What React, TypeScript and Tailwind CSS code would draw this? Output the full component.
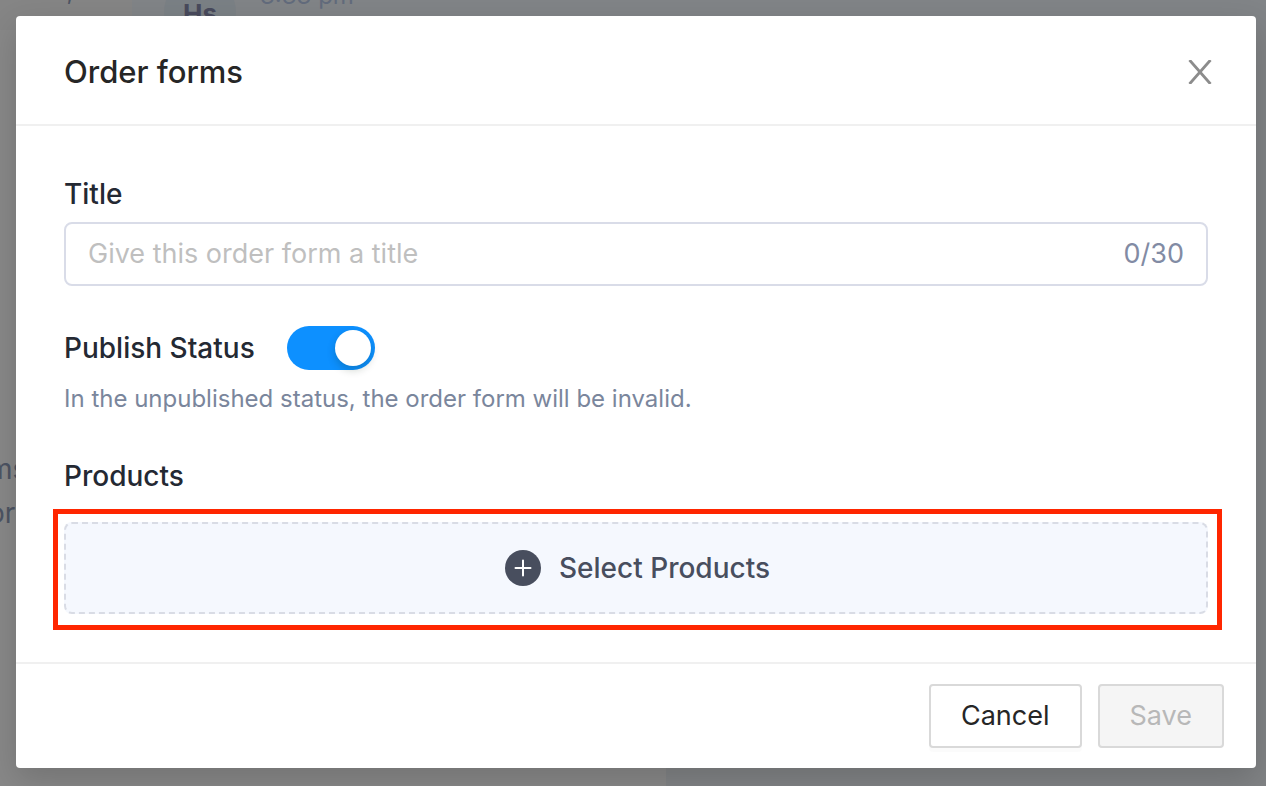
import { useState } from "react";

const MAX_TITLE = 30;

function Backdrop() {
  return (
    <div aria-hidden className="absolute inset-0 flex overflow-hidden bg-[#818385] text-[#4d5463]">
      <div className="flex w-[666px] shrink-0 flex-col bg-[#888888]">
        <div className="flex h-[30px] shrink-0">
          <div className="flex w-[132px] shrink-0 items-start justify-center bg-[#858585] pl-2">
            <span className="-mt-5 text-2xl leading-none">,</span>
          </div>
          <div className="-mr-[600px] flex grow items-start bg-[#818487] pl-8">
            <span className="-mt-6 grid h-[72px] w-[72px] shrink-0 place-items-center rounded-full bg-[#7a8085] pt-1 text-[26px] font-bold leading-8 text-[#484a5c]">
              Hs
            </span>
            <span className="ml-6 -mt-5 text-2xl leading-8 text-[#626b7c]">3:33 pm</span>
          </div>
        </div>
        <div className="mt-[417px] -ml-3 text-[28px] leading-[44px]">
          <p>ms</p>
          <p>or</p>
        </div>
      </div>
    </div>
  );
}

function CloseIcon() {
  return (
    <svg aria-hidden viewBox="0 0 24 24" className="h-6 w-6" fill="none" stroke="#8c8c8c" strokeWidth="2.8">
      <path d="M1.5 0 L22.5 24 M22.5 0 L1.5 24" />
    </svg>
  );
}

function PlusCircleIcon() {
  return (
    <svg aria-hidden viewBox="0 0 36 36" className="h-9 w-9" fill="none">
      <circle cx="18" cy="18" r="18" fill="#484e5e" />
      <path d="M10.5 18h15M18 10.5v15" stroke="#fff" strokeWidth="2" strokeLinecap="round" />
    </svg>
  );
}

export default function App() {
  const [title, setTitle] = useState("");
  const [published, setPublished] = useState(true);

  return (
    <div className="relative min-h-screen overflow-hidden pt-4 pr-2.5 pb-4 pl-4 font-['Inter','Liberation_Sans',sans-serif]">
      <Backdrop />
      <section
        role="dialog"
        aria-labelledby="dialog-title"
        className="relative rounded bg-white text-[28px] leading-10 shadow-[0_12px_32px_rgba(0,0,0,0.16)]"
      >
        <header className="flex items-center justify-between border-b-2 border-[#f0f0f0] pt-[34px] pr-11 pb-[30px] pl-12">
          <h1 id="dialog-title" className="text-[31px] leading-[44px] font-medium text-[#262626]">
            Order forms
          </h1>
          <button type="button" aria-label="Close">
            <CloseIcon />
          </button>
        </header>

        <div className="px-12 pt-12 pb-8 text-[#242933]">
          <label htmlFor="form-title" className="block font-medium">
            Title
          </label>
          <div className="mt-2 flex h-16 items-center rounded-lg border-2 border-[#d9dce8] px-[22px] text-[27px]">
            <input
              id="form-title"
              type="text"
              value={title}
              maxLength={MAX_TITLE}
              onChange={(e) => setTitle(e.target.value)}
              placeholder="Give this order form a title"
              className="min-w-0 grow outline-none placeholder:text-[#bfbfbf]"
            />
            <span className="text-[#828ba4]">
              {title.length}/{MAX_TITLE}
            </span>
          </div>

          <div className="mt-10 flex items-center gap-8">
            <label htmlFor="publish-status" className="font-medium">
              Publish Status
            </label>
            <input
              id="publish-status"
              type="checkbox"
              role="switch"
              checked={published}
              onChange={(e) => setPublished(e.target.checked)}
              className="flex h-11 w-[88px] appearance-none items-center rounded-full bg-[#bfbfbf] p-1 before:h-9 before:w-9 before:rounded-full before:bg-white before:shadow-[0_4px_8px_rgba(0,35,11,0.2)] checked:justify-end checked:bg-[#0d90ff]"
            />
          </div>
          <p className="mt-[9px] text-2xl leading-10 text-[#7a869c]">
            In the unpublished status, the order form will be invalid.
          </p>

          <h2 className="mt-[37px] font-medium">Products</h2>
          <div className="mt-[13px] mr-[-14px] ml-[-11px] border-[5px] border-[#ff2600] pt-2 pr-[9px] pb-[11px] pl-1.5">
            <button
              type="button"
              className="flex h-[92px] w-full items-center justify-center gap-[18px] rounded-lg border-2 border-dashed border-[#d9dce5] bg-[#f5f8fe] pl-[3px] font-medium text-[#484e5e]"
            >
              <PlusCircleIcon />
              Select Products
            </button>
          </div>
        </div>

        <footer className="flex justify-end gap-4 border-t-2 border-[#f0f0f0] px-8 py-5 text-[27px]">
          <button
            type="button"
            className="h-16 rounded border-2 border-[#d9d9d9] bg-white px-[30px] text-[#262626] shadow-[0_4px_0_rgba(0,0,0,0.016)]"
          >
            Cancel
          </button>
          <button
            type="button"
            disabled
            className="h-16 rounded border-2 border-[#d9d9d9] bg-[#f5f5f5] px-[30px] text-[#b8b8b8]"
          >
            Save
          </button>
        </footer>
      </section>
    </div>
  );
}
